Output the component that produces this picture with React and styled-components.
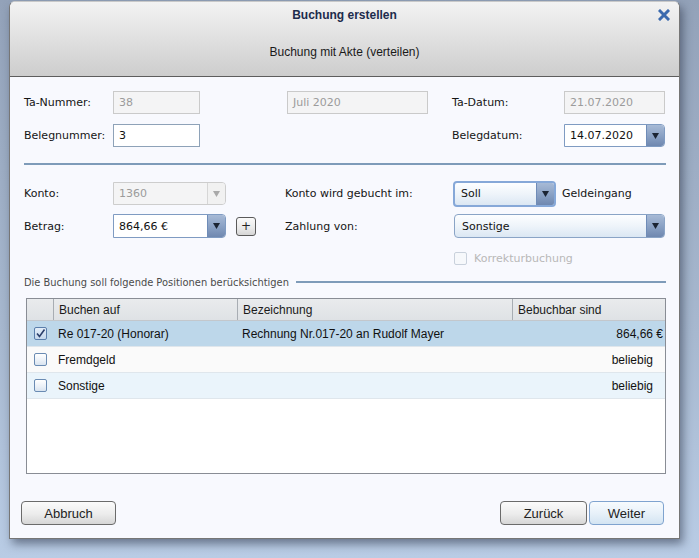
import React from "react";
import styled, { createGlobalStyle, css } from "styled-components";

const GlobalStyle = createGlobalStyle`
  html, body {
    margin: 0;
    padding: 0;
    height: 558px;
    overflow: hidden;
  }
  body {
    background: linear-gradient(to bottom, #93a2b9 0%, #a7b8cf 60%, #b9cce5 100%);
    font-family: "DejaVu Sans", sans-serif;
  }
`;

const Screen = styled.div`
  padding: 1px 0 0 9px;
`;

const Dialog = styled.div`
  width: 671px;
  height: 538px;
  box-sizing: border-box;
  border: 1px solid #767676;
  border-top-color: #c9c9c9;
  border-radius: 6px 6px 0 0;
  background: #f8f9fe;
  box-shadow: 3px 5px 10px rgba(40, 50, 70, 0.55);
  display: flex;
  flex-direction: column;
  overflow: hidden;
`;

const Header = styled.div`
  position: relative;
  height: 74px;
  border-bottom: 1px solid #5d5d5d;
  background: linear-gradient(to bottom, #f3f3f3 0%, #dedede 55%, #cdcdcd 100%);
  display: flex;
  flex-direction: column;
  align-items: center;
  font-family: "Liberation Sans", Arial, sans-serif;
  font-size: 12px;
`;

const Title = styled.div`
  margin-top: 5px;
  line-height: 16px;
  font-weight: bold;
  color: #1d2b4c;
`;

const Subtitle = styled.div`
  margin-top: 21px;
  line-height: 16px;
  color: #1a1a1a;
`;

const CloseButton = styled.div`
  position: absolute;
  top: 7px;
  right: 9px;
  width: 12px;
  height: 12px;
  display: flex;
`;

const Body = styled.div`
  padding: 14px 13px 0 14px;
  display: flex;
  flex-direction: column;
`;

const Row = styled.div`
  display: flex;
  align-items: center;
  height: ${(p) => p.h}px;
  margin-top: ${(p) => p.mt || 0}px;
`;

const Label = styled.span`
  width: ${(p) => p.w}px;
  flex-shrink: 0;
  font-size: 11px;
  color: #151515;
  white-space: nowrap;
`;

const Spacer = styled.span`
  width: ${(p) => p.w}px;
  flex-shrink: 0;
`;

const TextField = styled.div`
  width: ${(p) => p.w}px;
  height: 23px;
  box-sizing: border-box;
  flex-shrink: 0;
  padding-left: 5px;
  line-height: 21px;
  font-size: 11px;
  ${(p) =>
    p.disabled
      ? css`
          border: 1px solid #cacaca;
          background: #f4f4f5;
          color: #9b9b9b;
        `
      : css`
          border: 1px solid #8ea2b8;
          background: #ffffff;
          color: #111;
        `}
`;

const Combo = styled.div`
  width: ${(p) => p.w}px;
  height: ${(p) => p.h || 23}px;
  box-sizing: border-box;
  flex-shrink: 0;
  display: flex;
  font-size: 11px;
  border-radius: ${(p) => (p.round ? "4px" : "0 4px 4px 0")};
  overflow: hidden;
  ${(p) =>
    p.disabled
      ? css`
          border: 1px solid #cdcdcd;
          background: #f4f4f5;
          color: #9b9b9b;
        `
      : p.focused
      ? css`
          border: 2px solid #86a8d8;
          background: linear-gradient(to bottom, #fdfeff 0%, #eef4fa 50%, #dbe7f3 100%);
          color: #111;
        `
      : p.round
      ? css`
          border: 1px solid #8aa4c6;
          background: linear-gradient(to bottom, #fdfeff 0%, #eef4fa 50%, #dbe7f3 100%);
          color: #111;
        `
      : css`
          border: 1px solid #7f9bc2;
          background: #ffffff;
          color: #111;
        `}
`;

const ComboText = styled.div`
  flex: 1;
  padding-left: ${(p) => p.pl || 5}px;
  display: flex;
  align-items: center;
`;

const ComboButton = styled.div`
  width: 17px;
  flex-shrink: 0;
  display: flex;
  align-items: center;
  justify-content: center;
  ${(p) =>
    p.disabled
      ? css`
          border-left: 1px solid #d6d6d6;
          background: #f1f1f1;
        `
      : css`
          border-left: 1px solid #6f8cb8;
          background: linear-gradient(to bottom, #a7bad6 0%, #8ba2c5 50%, #6f88b0 100%);
        `}
`;

const PlusButton = styled.div`
  width: 20px;
  height: 19px;
  box-sizing: border-box;
  margin-left: 10px;
  border: 1px solid #5a5a5a;
  border-radius: 3px;
  background: linear-gradient(to bottom, #fafafa 0%, #e9e9e9 60%, #d6d6d6 100%);
  display: flex;
  align-items: center;
  justify-content: center;
  font-family: "DejaVu Sans", sans-serif;
  font-size: 12px;
  line-height: 1;
  color: #222;
`;

const CheckBox = styled.div`
  width: 13px;
  height: 13px;
  box-sizing: border-box;
  border-radius: 2px;
  flex-shrink: 0;
  display: flex;
  align-items: center;
  justify-content: center;
  ${(p) =>
    p.disabled
      ? css`
          border: 1px solid #c9d1dc;
          background: #f6f8fb;
        `
      : p.checked
      ? css`
          border: 1px solid #5a7eab;
          background: linear-gradient(to bottom, #e3edf8 0%, #c4d7ec 100%);
        `
      : css`
          border: 1px solid #6a8bb3;
          background: linear-gradient(to bottom, #ffffff 0%, #eaf0f7 60%, #d9e4f0 100%);
        `}
`;

const CheckText = styled.span`
  margin-left: 7px;
  font-size: 11px;
  color: ${(p) => (p.disabled ? "#b8b8b8" : "#151515")};
`;

const Separator = styled.div`
  height: 2px;
  background: #7e9bb9;
  margin-top: ${(p) => p.mt}px;
`;

const SectionHead = styled.div`
  display: flex;
  align-items: center;
  height: 12px;
  margin-top: 9px;
`;

const SectionText = styled.span`
  font-size: 9.9px;
  color: #4b4b4b;
  white-space: nowrap;
`;

const SectionLine = styled.div`
  flex: 1;
  height: 2px;
  margin-left: 7px;
  background: #7e9bb9;
`;

const TableBox = styled.div`
  margin: 10px 0 0 2px;
  width: 640px;
  height: 176px;
  box-sizing: border-box;
  border: 1px solid #898d95;
  background: #ffffff;
  font-family: "Liberation Sans", Arial, sans-serif;
  font-size: 12px;
  color: #111;
`;

const cols = "27px 184px 275px 1fr";

const HeadRow = styled.div`
  display: grid;
  grid-template-columns: ${cols};
  height: 22px;
  box-sizing: border-box;
  border-bottom: 1px solid #c3c7cc;
  background: linear-gradient(to bottom, #e9ebed 0%, #dfe2e5 100%);
`;

const HeadCell = styled.div`
  display: flex;
  align-items: center;
  padding-left: 5px;
  border-right: ${(p) => (p.last ? "none" : "1px solid #a8adb3")};
  color: #1a1a1a;
`;

const DataRow = styled.div`
  display: grid;
  grid-template-columns: ${cols};
  height: 26px;
  box-sizing: border-box;
  border-bottom: 1px solid #dfe6ec;
  background: ${(p) => p.bg};
`;

const Cell = styled.div`
  display: flex;
  align-items: center;
  justify-content: ${(p) => (p.right ? "flex-end" : p.center ? "center" : "flex-start")};
  padding-left: ${(p) => (p.center ? 0 : 4)}px;
  padding-right: ${(p) => p.pr || 0}px;
  white-space: nowrap;
`;

const Footer = styled.div`
  margin-top: 27px;
  padding: 0 15px 0 11px;
  display: flex;
  align-items: center;
`;

const Button = styled.div`
  width: ${(p) => p.w}px;
  height: 24px;
  box-sizing: border-box;
  margin-left: ${(p) => p.ml || 0}px;
  border-radius: 4px;
  display: flex;
  align-items: center;
  justify-content: center;
  font-family: "Liberation Sans", Arial, sans-serif;
  font-size: 13px;
  color: #222;
  ${(p) =>
    p.primary
      ? css`
          border: 1px solid #7fa3cf;
          background: linear-gradient(to bottom, #f7fbfe 0%, #e8f1f9 50%, #d3e4f2 100%);
        `
      : css`
          border: 1px solid #6b6b6b;
          background: linear-gradient(to bottom, #fbfbfb 0%, #ececec 55%, #d6d6d6 100%);
        `}
`;

const Push = styled.div`
  flex: 1;
`;

const Arrow = ({ color = "#1b2433" }) => (
  <svg width="7" height="6" viewBox="0 0 7 6">
    <path d="M0 0 L7 0 L3.5 6 Z" fill={color} />
  </svg>
);

const Check = () => (
  <svg width="11" height="11" viewBox="0 0 11 11">
    <path d="M2 5.5 L4.5 8.5 L9.5 1.5" fill="none" stroke="#2a3e6a" strokeWidth="1.6" />
  </svg>
);

const CloseIcon = () => (
  <svg width="12" height="12" viewBox="0 0 12 12">
    <path d="M2 2 L10 10 M10 2 L2 10" stroke="#3b6aae" strokeWidth="3" strokeLinecap="square" />
  </svg>
);

const rows = [
  { bg: "#bdd7ea", checked: true, a: "Re 017-20 (Honorar)", b: "Rechnung Nr.017-20 an Rudolf Mayer", c: "864,66 €", pr: 2 },
  { bg: "#fafafa", a: "Fremdgeld", b: "", c: "beliebig", pr: 12 },
  { bg: "#eaf4fb", a: "Sonstige", b: "", c: "beliebig", pr: 12 },
];

export default function App() {
  return (
    <>
      <GlobalStyle />
      <Screen>
        <Dialog>
          <Header>
            <Title>Buchung erstellen</Title>
            <Subtitle>Buchung mit Akte (verteilen)</Subtitle>
            <CloseButton>
              <CloseIcon />
            </CloseButton>
          </Header>
          <Body>
            <Row h={23}>
              <Label w={89}>Ta-Nummer:</Label>
              <TextField w={87} disabled>38</TextField>
              <Spacer w={87} />
              <TextField w={141} disabled>Juli 2020</TextField>
              <Spacer w={24} />
              <Label w={112}>Ta-Datum:</Label>
              <TextField w={101} disabled>21.07.2020</TextField>
            </Row>
            <Row h={23} mt={10}>
              <Label w={89}>Belegnummer:</Label>
              <TextField w={87}>3</TextField>
              <Spacer w={252} />
              <Label w={112}>Belegdatum:</Label>
              <Combo w={101}>
                <ComboText>14.07.2020</ComboText>
                <ComboButton>
                  <Arrow />
                </ComboButton>
              </Combo>
            </Row>
            <Separator mt={16} />
            <Row h={23} mt={17}>
              <Label w={89}>Konto:</Label>
              <Combo w={113} disabled>
                <ComboText>1360</ComboText>
                <ComboButton disabled>
                  <Arrow color="#a9a9a9" />
                </ComboButton>
              </Combo>
              <Spacer w={59} />
              <Label w={168}>Konto wird gebucht im:</Label>
              <Combo w={103} h={26} round focused>
                <ComboText pl={6}>Soll</ComboText>
                <ComboButton>
                  <Arrow />
                </ComboButton>
              </Combo>
              <Spacer w={6} />
              <Label w={80}>Geldeingang</Label>
            </Row>
            <Row h={24} mt={9}>
              <Label w={89}>Betrag:</Label>
              <Combo w={113} h={24}>
                <ComboText>864,66 €</ComboText>
                <ComboButton>
                  <Arrow />
                </ComboButton>
              </Combo>
              <PlusButton>+</PlusButton>
              <Spacer w={29} />
              <Label w={169}>Zahlung von:</Label>
              <Combo w={211} h={24} round>
                <ComboText pl={7}>Sonstige</ComboText>
                <ComboButton>
                  <Arrow />
                </ComboButton>
              </Combo>
            </Row>
            <Row h={17} mt={12}>
              <Spacer w={430} />
              <CheckBox disabled />
              <CheckText disabled>Korrekturbuchung</CheckText>
            </Row>
            <SectionHead>
              <SectionText>Die Buchung soll folgende Positionen berücksichtigen</SectionText>
              <SectionLine />
            </SectionHead>
            <TableBox>
              <HeadRow>
                <HeadCell />
                <HeadCell>Buchen auf</HeadCell>
                <HeadCell>Bezeichnung</HeadCell>
                <HeadCell last>Bebuchbar sind</HeadCell>
              </HeadRow>
              {rows.map((r) => (
                <DataRow key={r.a} bg={r.bg}>
                  <Cell center>
                    <CheckBox checked={r.checked}>{r.checked && <Check />}</CheckBox>
                  </Cell>
                  <Cell>{r.a}</Cell>
                  <Cell>{r.b}</Cell>
                  <Cell right pr={r.pr}>{r.c}</Cell>
                </DataRow>
              ))}
            </TableBox>
          </Body>
          <Footer>
            <Button w={95}>Abbruch</Button>
            <Push />
            <Button w={87}>Zurück</Button>
            <Button w={75} ml={2} primary>Weiter</Button>
          </Footer>
        </Dialog>
      </Screen>
    </>
  );
}
